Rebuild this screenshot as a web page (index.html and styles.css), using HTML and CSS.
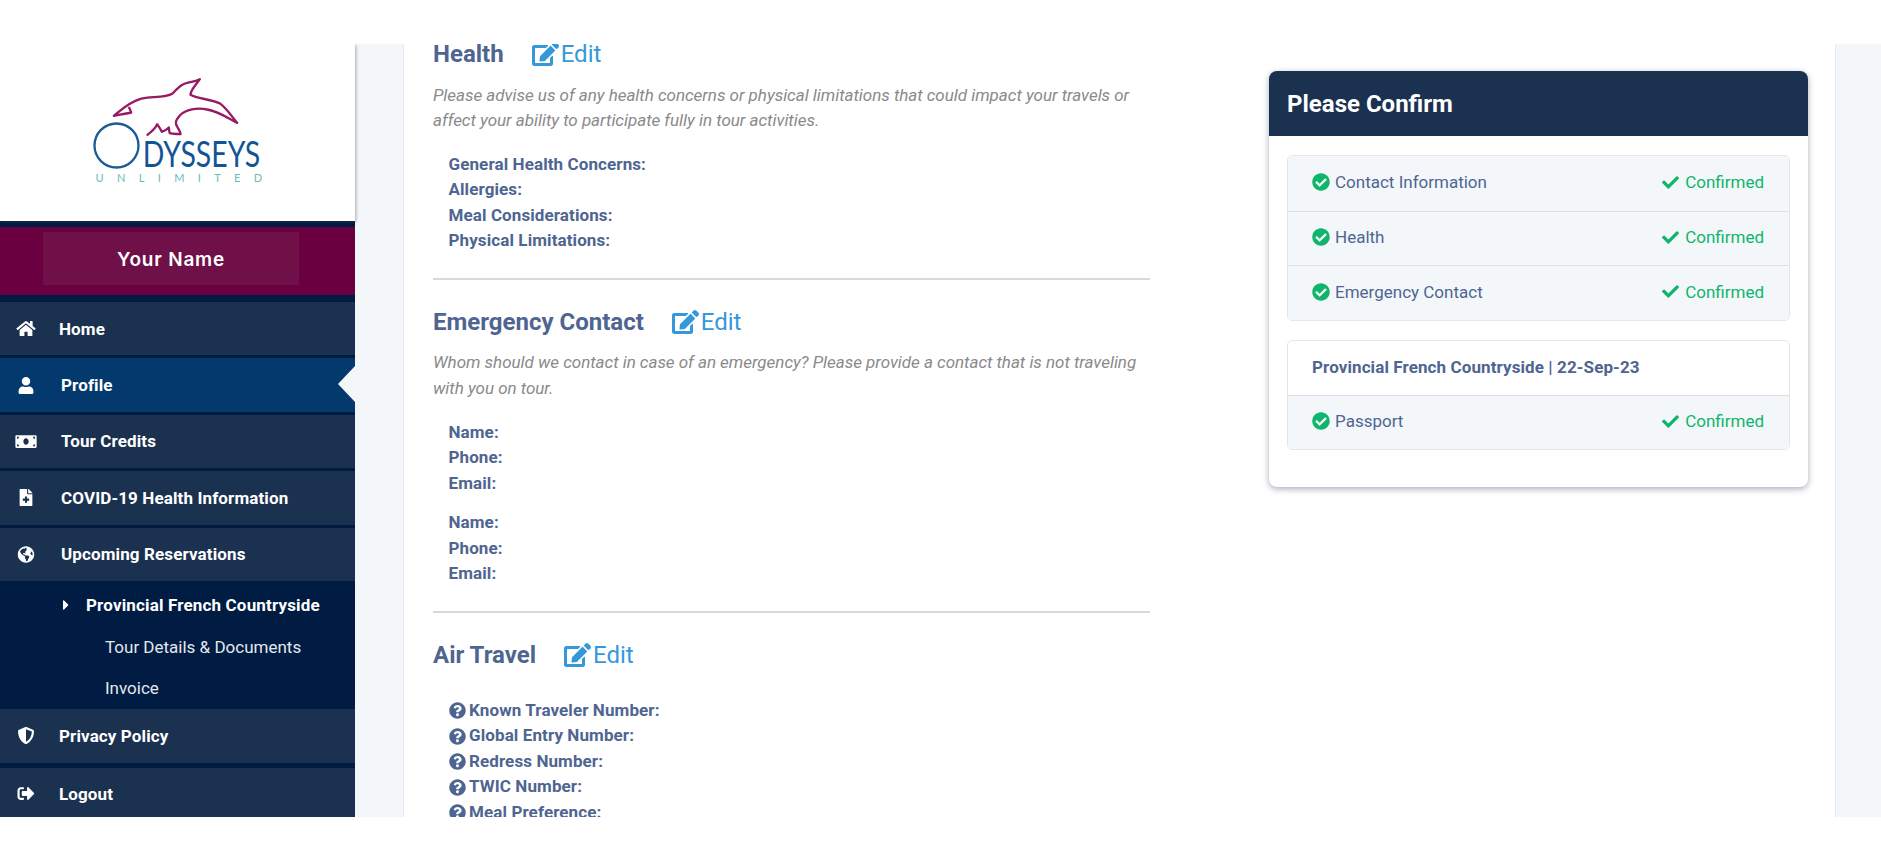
FILE: index.html
```html
<!DOCTYPE html>
<html lang="en">
<head>
<meta charset="utf-8">
<title>Odysseys Unlimited - Profile</title>
<link rel="stylesheet" href="styles.css">
</head>
<body>
<svg class="sprite" xmlns="http://www.w3.org/2000/svg">
  <symbol id="i-home" viewBox="0 0 576 512"><path d="M280.37 148.26L96 300.11V464a16 16 0 0 0 16 16l112.06-.29a16 16 0 0 0 15.92-16V368a16 16 0 0 1 16-16h64a16 16 0 0 1 16 16v95.64a16 16 0 0 0 16 16.05L464 480a16 16 0 0 0 16-16V300L295.67 148.26a12.19 12.19 0 0 0-15.3 0zM571.6 251.47L488 182.56V44.05a12 12 0 0 0-12-12h-56a12 12 0 0 0-12 12v72.61L318.47 43a48 48 0 0 0-61 0L4.34 251.47a12 12 0 0 0-1.6 16.9l25.5 31A12 12 0 0 0 45.15 301l235.22-193.74a12.19 12.19 0 0 1 15.3 0L530.9 301a12 12 0 0 0 16.9-1.6l25.5-31a12 12 0 0 0-1.7-16.93z"/></symbol>
  <symbol id="i-user" viewBox="0 0 448 512"><path d="M224 256c70.7 0 128-57.3 128-128S294.7 0 224 0 96 57.3 96 128s57.3 128 128 128zm89.6 32h-16.7c-22.2 10.2-46.9 16-72.9 16s-50.6-5.8-72.9-16h-16.7C60.2 288 0 348.2 0 422.4V464c0 26.5 21.5 48 48 48h352c26.5 0 48-21.5 48-48v-41.6c0-74.2-60.2-134.4-134.4-134.4z"/></symbol>
  <symbol id="i-money" viewBox="0 0 640 512"><path d="M608 64H32C14.33 64 0 78.33 0 96v320c0 17.67 14.33 32 32 32h576c17.67 0 32-14.33 32-32V96c0-17.67-14.33-32-32-32zM48 400v-64c35.35 0 64 28.65 64 64H48zm0-224v-64h64c0 35.35-28.65 64-64 64zm272 176c-44.19 0-80-42.99-80-96 0-53.02 35.82-96 80-96s80 42.98 80 96c0 53.03-35.83 96-80 96zm272 48h-64c0-35.35 28.65-64 64-64v64zm0-224c-35.35 0-64-28.65-64-64h64v64z"/></symbol>
  <symbol id="i-file" viewBox="0 0 384 512"><path d="M377 105L279.1 7c-4.5-4.5-10.6-7-17-7H256v128h128v-6.1c0-6.3-2.5-12.4-7-16.9zm-153 31V0H24C10.7 0 0 10.7 0 24v464c0 13.3 10.7 24 24 24h336c13.3 0 24-10.7 24-24V160H248c-13.2 0-24-10.8-24-24zm64 160v48c0 4.4-3.6 8-8 8h-56v56c0 4.4-3.6 8-8 8h-48c-4.4 0-8-3.6-8-8v-56h-56c-4.4 0-8-3.6-8-8v-48c0-4.4 3.6-8 8-8h56v-56c0-4.4 3.6-8 8-8h48c4.4 0 8 3.6 8 8v56h56c4.4 0 8 3.6 8 8z"/></symbol>
  <symbol id="i-globe" viewBox="0 0 496 512"><path d="M248 8C111.03 8 0 119.03 0 256s111.03 248 248 248 248-111.03 248-248S384.97 8 248 8zm82.29 357.6c-3.9 3.88-7.99 7.95-11.31 11.28-2.99 3-5.1 6.7-6.17 10.71-1.51 5.66-2.73 11.38-4.77 16.87l-17.39 46.85c-13.76 3-28 4.69-42.65 4.69v-27.38c1.69-12.62-7.64-36.26-22.63-51.25-6-6-9.37-14.14-9.37-22.63v-32.01c0-11.64-6.27-22.34-16.46-27.97-14.37-7.95-34.81-19.06-48.81-26.11-11.48-5.78-22.1-13.14-31.65-21.75l-.8-.72a114.792 114.792 0 0 1-18.06-20.74c-9.38-13.77-24.66-36.42-34.59-51.14 20.47-45.5 57.36-82.04 103.2-101.89l24.01 12.01C203.48 89.74 216 82.01 216 70.11v-11.3c7.99-1.29 16.12-2.11 24.39-2.42l28.3 28.3c6.25 6.25 6.25 16.38 0 22.63L264 112l-10.34 10.34c-3.12 3.12-3.12 8.19 0 11.31l4.69 4.69c3.12 3.12 3.12 8.19 0 11.31l-8 8a8.008 8.008 0 0 1-5.66 2.34h-8.99c-2.08 0-4.08.81-5.58 2.27l-9.92 9.65a8.008 8.008 0 0 0-1.58 9.31l15.59 31.19c2.66 5.32-1.21 11.58-7.15 11.58h-5.64c-1.93 0-3.79-.7-5.24-1.96l-9.28-8.06a16.017 16.017 0 0 0-15.55-3.1l-31.17 10.39a11.95 11.95 0 0 0-8.17 11.34c0 4.53 2.56 8.66 6.61 10.69l11.08 5.54c9.41 4.71 19.79 7.16 30.31 7.16s22.59 27.29 32 32h66.75c8.49 0 16.62 3.37 22.63 9.37l13.69 13.69a30.503 30.503 0 0 1 8.93 21.57 46.536 46.536 0 0 1-13.72 32.98zM417 274.25c-5.79-1.45-10.84-5-14.15-9.97l-17.98-26.97a23.97 23.97 0 0 1 0-26.62l19.59-29.38c2.32-3.47 5.5-6.29 9.24-8.15l12.98-6.49C440.2 193.59 448 223.87 448 256c0 8.67-.74 17.16-1.82 25.54L417 274.25z"/></symbol>
  <symbol id="i-shield" viewBox="0 0 512 512"><path d="M466.5 83.7l-192-80a48.15 48.15 0 0 0-36.9 0l-192 80C27.7 91.1 16 108.6 16 128c0 198.5 114.5 335.7 221.5 380.3 11.8 4.9 25.1 4.9 36.9 0C360.1 472.6 496 349.3 496 128c0-19.4-11.7-36.9-29.5-44.3zM256.1 446.3l-.1-381 175.9 73.3c-3.3 151.4-82.1 261.1-175.8 307.7z"/></symbol>
  <symbol id="i-logout" viewBox="0 0 512 512"><path d="M497 273L329 441c-15 15-41 4.5-41-17v-96H152c-13.3 0-24-10.7-24-24v-96c0-13.3 10.7-24 24-24h136V88c0-21.4 25.9-32 41-17l168 168c9.3 9.4 9.3 24.6 0 34zM192 436v-40c0-6.6-5.4-12-12-12H96c-17.7 0-32-14.3-32-32V160c0-17.7 14.3-32 32-32h84c6.6 0 12-5.4 12-12V76c0-6.6-5.4-12-12-12H96c-53 0-96 43-96 96v192c0 53 43 96 96 96h84c6.6 0 12-5.4 12-12z"/></symbol>
  <symbol id="i-caret" viewBox="0 0 192 512"><path d="M0 384.662V127.338c0-17.818 21.543-26.741 34.142-14.142l128.662 128.662c7.81 7.81 7.81 20.474 0 28.284L34.142 398.804C21.543 411.404 0 402.48 0 384.662z"/></symbol>
  <symbol id="i-edit" viewBox="0 0 576 512"><path d="M402.6 83.2l90.2 90.2c3.8 3.8 3.8 10 0 13.8L274.4 405.6l-92.8 10.3c-12.4 1.4-22.9-9.1-21.5-21.5l10.3-92.8L388.8 83.2c3.8-3.8 10-3.8 13.8 0zm162-22.9l-48.8-48.8c-15.2-15.2-39.9-15.2-55.2 0l-35.4 35.4c-3.8 3.8-3.8 10 0 13.8l90.2 90.2c3.8 3.8 10 3.8 13.8 0l35.4-35.4c15.2-15.3 15.2-40 0-55.2zM384 346.2V448H64V128h229.8c3.2 0 6.2-1.3 8.5-3.5l40-40c7.6-7.6 2.2-20.5-8.5-20.5H48C21.5 64 0 85.5 0 112v352c0 26.5 21.5 48 48 48h352c26.5 0 48-21.5 48-48V306.2c0-10.7-12.9-16-20.5-8.5l-40 40c-2.2 2.3-3.5 5.3-3.5 8.5z"/></symbol>
  <symbol id="i-question" viewBox="0 0 512 512"><path d="M504 256c0 136.997-111.043 248-248 248S8 392.997 8 256C8 119.083 119.043 8 256 8s248 111.083 248 248zM262.655 90c-54.497 0-89.255 22.957-116.549 63.758-3.536 5.286-2.353 12.415 2.715 16.258l34.699 26.31c5.205 3.947 12.621 3.008 16.665-2.122 17.864-22.658 30.113-35.797 57.303-35.797 20.429 0 45.698 13.148 45.698 32.958 0 14.976-12.363 22.667-32.534 33.976C247.128 238.528 216 254.941 216 296v4c0 6.627 5.373 12 12 12h56c6.627 0 12-5.373 12-12v-1.333c0-28.462 83.186-29.647 83.186-106.667 0-58.002-60.165-102-116.531-102zM256 338c-25.365 0-46 20.635-46 46 0 25.364 20.635 46 46 46s46-20.636 46-46c0-25.365-20.635-46-46-46z"/></symbol>
  <symbol id="i-check-circle" viewBox="0 0 512 512"><path d="M504 256c0 136.967-111.033 248-248 248S8 392.967 8 256 119.033 8 256 8s248 111.033 248 248zM227.314 387.314l184-184c6.248-6.248 6.248-16.379 0-22.627l-22.627-22.627c-6.248-6.249-16.379-6.249-22.628 0L216 308.118l-70.059-70.059c-6.248-6.248-16.379-6.248-22.628 0l-22.627 22.627c-6.248 6.248-6.248 16.379 0 22.627l104 104c6.249 6.249 16.379 6.249 22.628.001z"/></symbol>
  <symbol id="i-check" viewBox="0 0 512 512"><path d="M173.898 439.404l-166.4-166.4c-9.997-9.997-9.997-26.206 0-36.204l36.203-36.204c9.997-9.998 26.207-9.998 36.204 0L192 312.69 432.095 72.596c9.997-9.997 26.207-9.997 36.204 0l36.203 36.204c9.997 9.997 9.997 26.206 0 36.204l-294.4 294.401c-9.998 9.997-26.207 9.997-36.204-.001z"/></symbol>
</svg>

<div class="app">
  <aside class="sidebar">
    <div class="logo">
      <svg class="logo-art" viewBox="262.5 217.5 540 360" xmlns="http://www.w3.org/2000/svg" role="img" aria-label="Odysseys Unlimited">
        <path class="dolphin" d="M340 346C360 330 385 305 420 295C450 288 495 292 515 280C530 268 535 252 560 247C575 243 588 242 598 236C585 255 570 268 570 283C590 296 635 295 660 310C680 325 695 350 710 367C685 355 660 335 620 327C590 320 555 327 538 345C525 360 522 368 532 382C537 390 540 396 540 401C525 400 515 400 508 398C505 392 506 386 505 381C498 388 492 392 484 394C480 386 475 378 470 371C465 385 450 396 441 403M340 346C355 343 375 340 392 336C390 330 388 326 386 322"/>
        <circle class="logo-o" cx="348" cy="435" r="66"/>
        <text class="logo-name" x="427" y="498" textLength="352" lengthAdjust="spacingAndGlyphs">DYSSEYS</text>
        <text class="logo-sub" x="285" y="544" textLength="500" lengthAdjust="spacing">UNLIMITED</text>
      </svg>
    </div>
    <div class="user-band"><div class="user-name">Your Name</div></div>
    <nav class="nav">
      <a class="nav-item nav-item--tight"><svg class="nav-icon"><use href="#i-home"/></svg><span>Home</span></a>
      <a class="nav-item nav-item--active"><svg class="nav-icon"><use href="#i-user"/></svg><span>Profile</span></a>
      <a class="nav-item"><svg class="nav-icon"><use href="#i-money"/></svg><span>Tour Credits</span></a>
      <a class="nav-item"><svg class="nav-icon"><use href="#i-file"/></svg><span>COVID-19 Health Information</span></a>
      <a class="nav-item nav-item--open"><svg class="nav-icon"><use href="#i-globe"/></svg><span>Upcoming Reservations</span></a>
      <div class="subnav">
        <a class="sub-title"><svg class="sub-caret"><use href="#i-caret"/></svg><span>Provincial French Countryside</span></a>
        <a class="sub-link">Tour Details &amp; Documents</a>
        <a class="sub-link">Invoice</a>
      </div>
      <a class="nav-item nav-item--tight nav-item--flush"><svg class="nav-icon"><use href="#i-shield"/></svg><span>Privacy Policy</span></a>
      <a class="nav-item nav-item--tight nav-item--last"><svg class="nav-icon"><use href="#i-logout"/></svg><span>Logout</span></a>
    </nav>
  </aside>

  <main class="main">
    <div class="sheet">
      <div class="details">
        <section class="group">
          <h2 class="group-head"><span>Health</span><a class="edit"><svg class="edit-icon"><use href="#i-edit"/></svg>Edit</a></h2>
          <p class="note">Please advise us of any health concerns or physical limitations that could impact your travels or affect your ability to participate fully in tour activities.</p>
          <ul class="fields">
            <li>General Health Concerns:</li>
            <li>Allergies:</li>
            <li>Meal Considerations:</li>
            <li>Physical Limitations:</li>
          </ul>
        </section>
        <section class="group">
          <h2 class="group-head"><span>Emergency Contact</span><a class="edit"><svg class="edit-icon"><use href="#i-edit"/></svg>Edit</a></h2>
          <p class="note">Whom should we contact in case of an emergency? Please provide a contact that is not traveling with you on tour.</p>
          <ul class="fields">
            <li>Name:</li>
            <li>Phone:</li>
            <li>Email:</li>
          </ul>
          <ul class="fields fields--next">
            <li>Name:</li>
            <li>Phone:</li>
            <li>Email:</li>
          </ul>
        </section>
        <section class="group group--last">
          <h2 class="group-head"><span>Air Travel</span><a class="edit"><svg class="edit-icon"><use href="#i-edit"/></svg>Edit</a></h2>
          <ul class="fields fields--help">
            <li><svg class="help-icon"><use href="#i-question"/></svg>Known Traveler Number:</li>
            <li><svg class="help-icon"><use href="#i-question"/></svg>Global Entry Number:</li>
            <li><svg class="help-icon"><use href="#i-question"/></svg>Redress Number:</li>
            <li><svg class="help-icon"><use href="#i-question"/></svg>TWIC Number:</li>
            <li><svg class="help-icon"><use href="#i-question"/></svg>Meal Preference:</li>
          </ul>
        </section>
      </div>

      <aside class="card">
        <h3 class="card-head">Please Confirm</h3>
        <div class="card-body">
          <ul class="checklist">
            <li class="check-row"><span class="check-name"><svg class="ok-icon"><use href="#i-check-circle"/></svg>Contact Information</span><span class="check-state"><svg class="tick-icon"><use href="#i-check"/></svg>Confirmed</span></li>
            <li class="check-row"><span class="check-name"><svg class="ok-icon"><use href="#i-check-circle"/></svg>Health</span><span class="check-state"><svg class="tick-icon"><use href="#i-check"/></svg>Confirmed</span></li>
            <li class="check-row"><span class="check-name"><svg class="ok-icon"><use href="#i-check-circle"/></svg>Emergency Contact</span><span class="check-state"><svg class="tick-icon"><use href="#i-check"/></svg>Confirmed</span></li>
          </ul>
          <ul class="checklist">
            <li class="check-title">Provincial French Countryside | 22-Sep-23</li>
            <li class="check-row"><span class="check-name"><svg class="ok-icon"><use href="#i-check-circle"/></svg>Passport</span><span class="check-state"><svg class="tick-icon"><use href="#i-check"/></svg>Confirmed</span></li>
          </ul>
        </div>
      </aside>
    </div>
  </main>
</div>
</body>
</html>
```

FILE: styles.css
```css
* { box-sizing: border-box; }

html, body { margin: 0; padding: 0; background: #fff; }

body {
  height: 861px;
  overflow: hidden;
  font-family: Roboto, "Liberation Sans", sans-serif;
  font-size: 17px;
  color: #4f6591;
}

.sprite { display: none; }

ul { list-style: none; margin: 0; padding: 0; }
p, h2, h3 { margin: 0; }

.app {
  display: flex;
  height: 773px;
  margin-top: 44px;
  overflow: hidden;
}

/* Sidebar */
.sidebar {
  flex: 0 0 355px;
  display: flex;
  flex-direction: column;
  background: #001c42;
  position: relative;
  z-index: 1;
}

.logo {
  flex: none;
  height: 177px;
  display: flex;
  align-items: center;
  justify-content: center;
  background: #fff;
  box-shadow: 1px 1px 3px rgba(60, 70, 80, .45);
}

.logo-art { width: 180px; height: 120px; display: block; }

.dolphin {
  fill: none;
  stroke: #971a62;
  stroke-width: 7;
  stroke-linejoin: round;
  stroke-linecap: round;
}

.logo-o { fill: none; stroke: #1c5c96; stroke-width: 7; }

.logo-name {
  font-family: Lato, sans-serif;
  font-weight: 400;
  font-size: 108px;
  fill: #125596;
}

.logo-sub {
  font-family: Lato, sans-serif;
  font-weight: 400;
  font-size: 33px;
  fill: #69bcb8;
}

.user-band {
  flex: none;
  height: 68px;
  margin-top: 6px;
  padding: 5px 56px 10px 43px;
  background: #6a0040;
}

.user-name {
  height: 53px;
  padding-top: 1px;
  display: flex;
  align-items: center;
  justify-content: center;
  background: #6f1049;
  color: #fff;
  font-family: Inter, Roboto, sans-serif;
  font-size: 19px;
  font-weight: 600;
  letter-spacing: .8px;
}

.nav { flex: none; margin-top: 7px; display: flex; flex-direction: column; }

.nav-item {
  flex: none;
  height: 53.4px;
  margin-bottom: 3px;
  padding-left: 15px;
  display: flex;
  align-items: center;
  gap: 24px;
  background: #1a3150;
  color: #fff;
  font-weight: 700;
  letter-spacing: .12px;
  position: relative;
}

.nav-item--tight { gap: 22px; }

.nav-item--active { background: #03396c; }

.nav-item--active::after {
  content: "";
  position: absolute;
  right: 0;
  top: 8px;
  border-style: solid;
  border-width: 18px 17px 18px 0;
  border-color: transparent #f4f7fa transparent transparent;
}

.nav-item--open { margin-bottom: 0; height: 53px; }

.nav-item--flush { height: 54px; margin-bottom: 5px; }
.nav-item--last { height: 49px; margin-bottom: 0; padding-top: 3px; }

.nav-icon { width: 22px; height: 17px; flex: none; fill: #fff; }

.subnav {
  flex: none;
  height: 128px;
  display: flex;
  flex-direction: column;
  color: #e3e8ef;
}

.sub-title {
  height: 45px;
  padding-top: 4px;
  padding-left: 62px;
  display: flex;
  align-items: center;
  gap: 16px;
  color: #fff;
  font-weight: 700;
  letter-spacing: .16px;
}

.sub-caret { width: 8px; height: 16px; flex: none; fill: #fff; }

.sub-link {
  height: 41px;
  padding-top: 1px;
  padding-left: 105px;
  display: flex;
  align-items: center;
}

/* Main */
.main {
  flex: 1;
  padding: 0 45px 0 48px;
  background: #f4f7fa;
  overflow: hidden;
}

.sheet {
  height: 100%;
  display: flex;
  align-items: flex-start;
  background: #fff;
  border-left: 1px solid #e6e9ed;
  border-right: 1px solid #e6e9ed;
}

.details { width: 717px; margin-left: 29px; flex: none; }

.group {
  padding-bottom: 24.2px;
  margin-bottom: 32px;
  border-bottom: 2px solid #d9d9d9;
}

.group--last { border: 0; margin: 0; padding: 0; }

.group-head {
  height: 20px;
  line-height: 20px;
  display: flex;
  align-items: center;
  gap: 28px;
  font-size: 24px;
  font-weight: 700;
  color: #4f6591;
}

.edit {
  display: flex;
  align-items: center;
  gap: 2px;
  color: #3498db;
  font-weight: 400;
}

.edit-icon { width: 27px; height: 24px; fill: #3498db; }

.note {
  margin-top: 18.5px;
  font-style: italic;
  line-height: 25.5px;
  letter-spacing: -.03px;
  color: #8a8a8a;
}

.fields {
  margin-top: 18px;
  padding-left: 15.5px;
  font-weight: 700;
  line-height: 25.5px;
  letter-spacing: .1px;
  color: #4f6591;
}

.note + .fields { margin-top: 18.3px; }

.fields--next { margin-top: 14px; }
.fields--help { margin-top: 33px; }

.fields--help li { display: flex; align-items: center; gap: 3.5px; }

.help-icon { width: 17px; height: 17px; flex: none; fill: #4f6591; }

/* Confirm card */
.card {
  width: 539px;
  margin: 27px 0 0 119px;
  flex: none;
  background: #fff;
  border-radius: 8px;
  box-shadow: 0 2px 6px rgba(60, 75, 100, .45);
  overflow: hidden;
}

.card-head {
  height: 65px;
  padding-left: 18px;
  display: flex;
  align-items: center;
  background: #1a3150;
  color: #fff;
  font-size: 24px;
  font-weight: 700;
}

.card-body { padding: 19px 18px 37px; display: flex; flex-direction: column; gap: 19px; }

.checklist {
  border: 1px solid #e3e6ea;
  border-radius: 5px;
  overflow: hidden;
}

.check-row {
  height: 54.5px;
  padding: 0 25px 2px 24px;
  display: flex;
  align-items: center;
  justify-content: space-between;
  background: #f4f7fa;
  border-top: 1px solid #dde1e7;
  color: #4f6591;
}

.check-row:first-child { border-top: 0; }

.check-title {
  height: 54px;
  padding: 0 0 2px 24px;
  display: flex;
  align-items: center;
  font-weight: 700;
  letter-spacing: .1px;
  color: #4f6591;
}

.check-name { display: flex; align-items: center; gap: 5px; }
.check-state { display: flex; align-items: center; gap: 5px; color: #0fb56a; }

.ok-icon { width: 18px; height: 18px; fill: #0fb56a; }
.tick-icon { width: 19px; height: 17px; fill: #0fb56a; }
```
